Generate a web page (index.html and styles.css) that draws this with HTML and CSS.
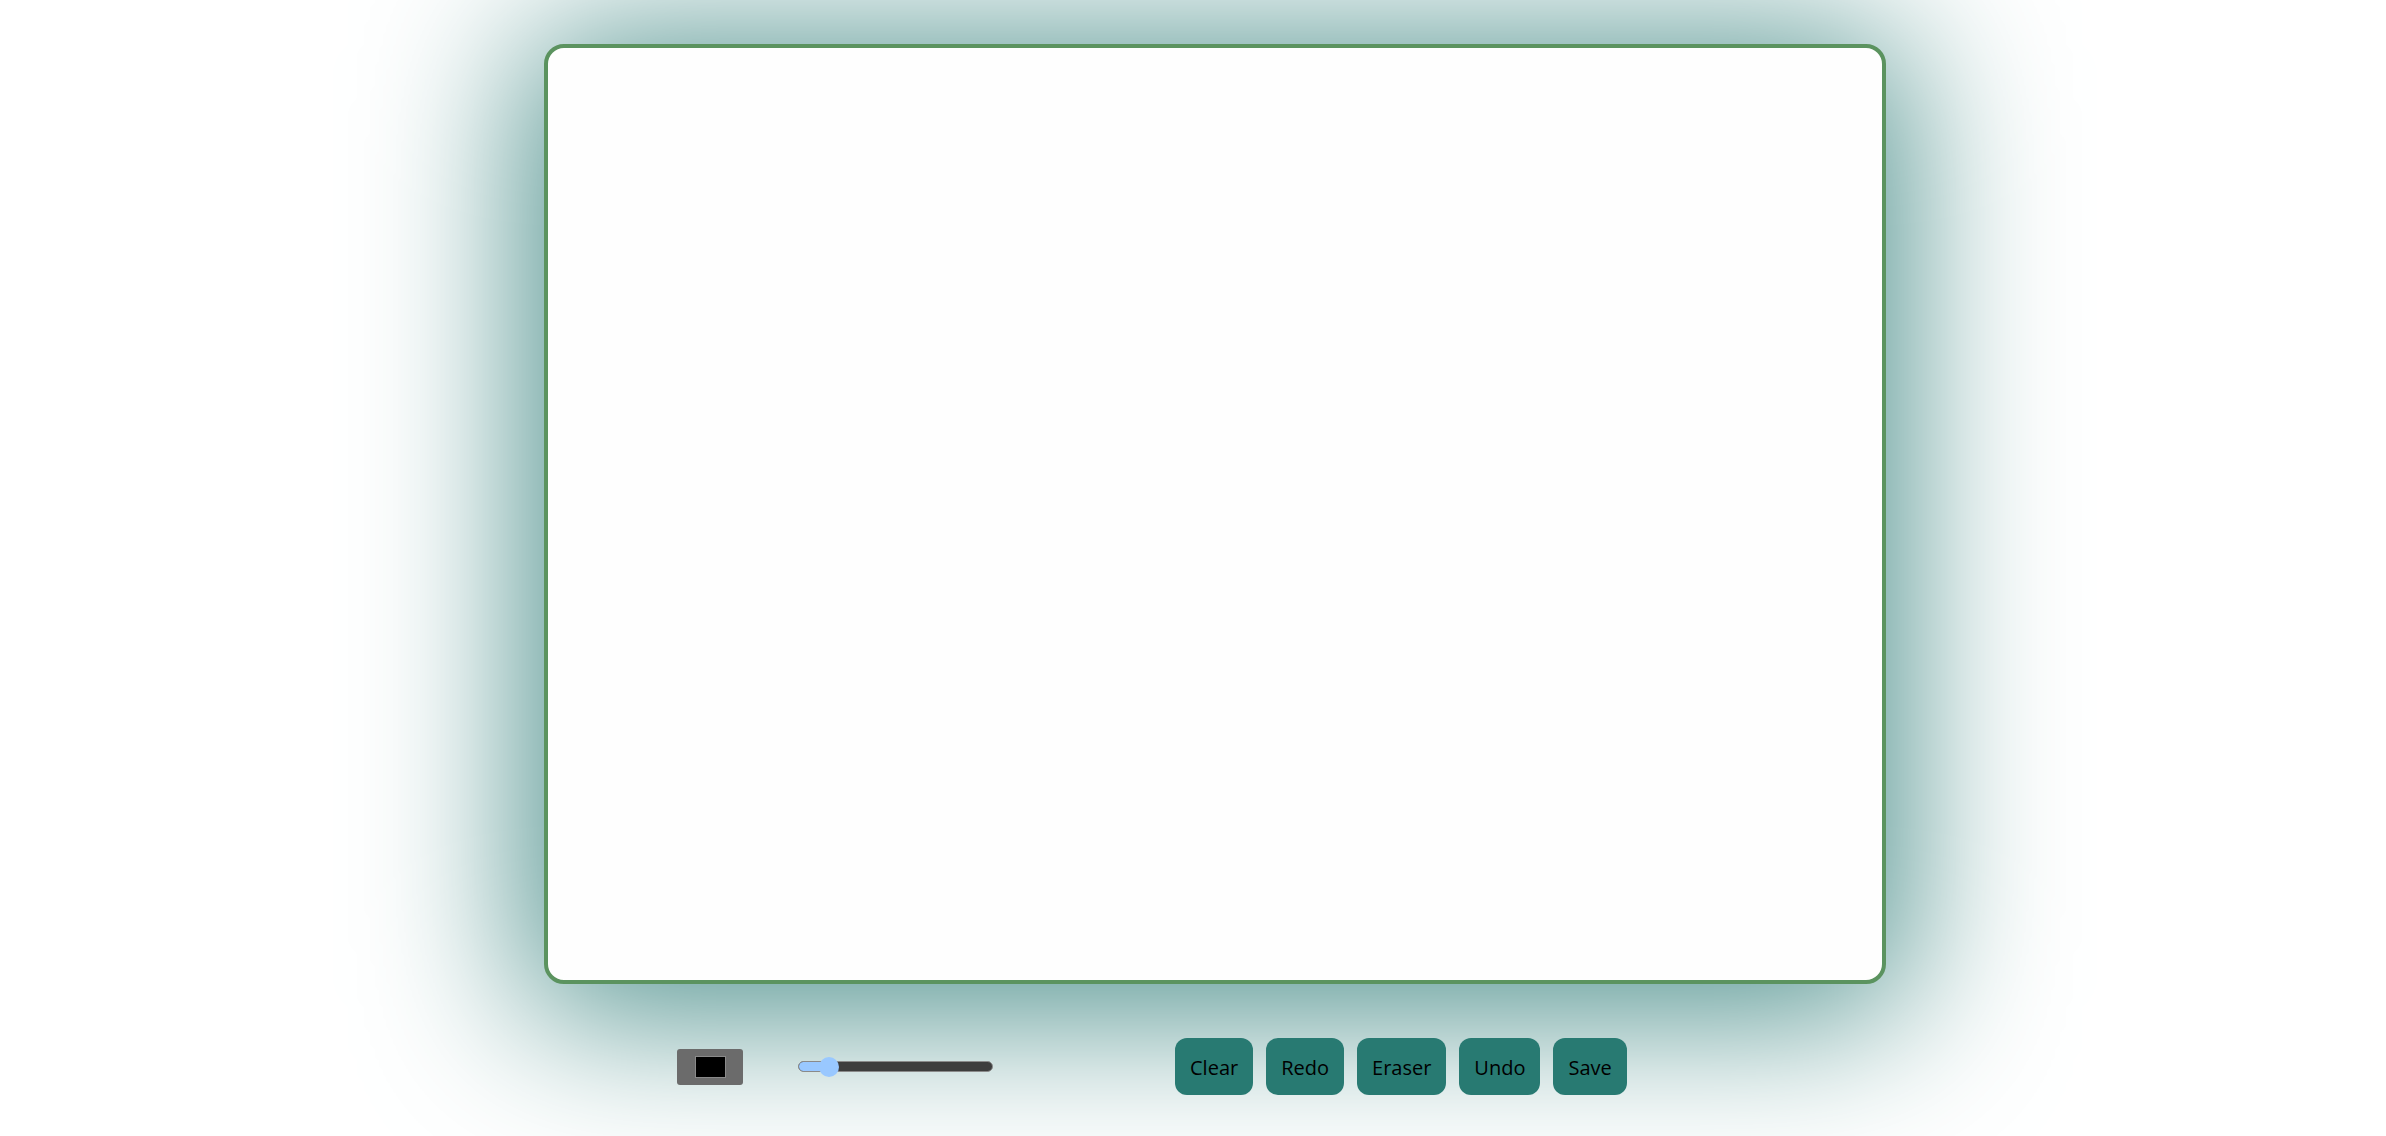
FILE: index.html
```
<!DOCTYPE html>
<html lang="en">
<head>
<meta charset="utf-8">
<title>Drawing Board</title>
<link rel="stylesheet" href="styles.css">
</head>
<body>
<div class="app">
  <div class="board"></div>
  <div class="toolbar">
    <div class="color-picker"><span class="swatch"></span></div>
    <div class="slider">
      <div class="track"><div class="fill"></div></div>
      <div class="thumb"></div>
    </div>
    <div class="buttons">
      <button class="btn">Clear</button>
      <button class="btn">Redo</button>
      <button class="btn">Eraser</button>
      <button class="btn">Undo</button>
      <button class="btn">Save</button>
    </div>
  </div>
</div>
</body>
</html>
```
FILE: styles.css
```
html, body {
  margin: 0;
  padding: 0;
  background: #ffffff;
  overflow: hidden;
}
.app {
  width: 2386px;
  height: 1136px;
  box-sizing: border-box;
  padding: 44px 0 0 544px;
  display: flex;
  flex-direction: column;
  align-items: flex-start;
}
.board {
  width: 1334px;
  height: 932px;
  border: 4px solid #5b935f;
  border-radius: 20px;
  background: #fefefe;
  box-shadow: 0 12px 160px 20px #4f918d;
}
.toolbar {
  display: flex;
  align-items: center;
  margin-top: 54px;
  padding-left: 133px;
}
.color-picker {
  width: 66px;
  height: 36px;
  background: #6b6b6b;
  border-radius: 3px;
  display: flex;
  align-items: center;
  justify-content: center;
  margin-right: 55px;
}
.swatch {
  width: 29px;
  height: 20px;
  background: #000;
  border: 1px solid #8a8a8a;
  box-sizing: content-box;
}
.slider {
  position: relative;
  width: 195px;
  height: 22px;
  display: flex;
  align-items: center;
  margin-right: 182px;
}
.track {
  width: 100%;
  height: 9px;
  background: #3d3d3d;
  border: 1px solid #8a8a8a;
  border-radius: 6px;
  overflow: hidden;
}
.fill {
  width: 32px;
  height: 100%;
  background: #99c8ff;
}
.thumb {
  position: absolute;
  left: 21px;
  top: 1px;
  width: 20px;
  height: 20px;
  border-radius: 50%;
  background: #99c8ff;
}
.buttons {
  display: flex;
  gap: 13px;
}
.btn {
  font-family: "Open Sans", "Noto Sans", sans-serif;
  font-size: 20px;
  color: #000;
  background: #287a72;
  border: none;
  border-radius: 12px;
  height: 57px;
  padding: 2px 15px 0;
  line-height: 1;
}
```
